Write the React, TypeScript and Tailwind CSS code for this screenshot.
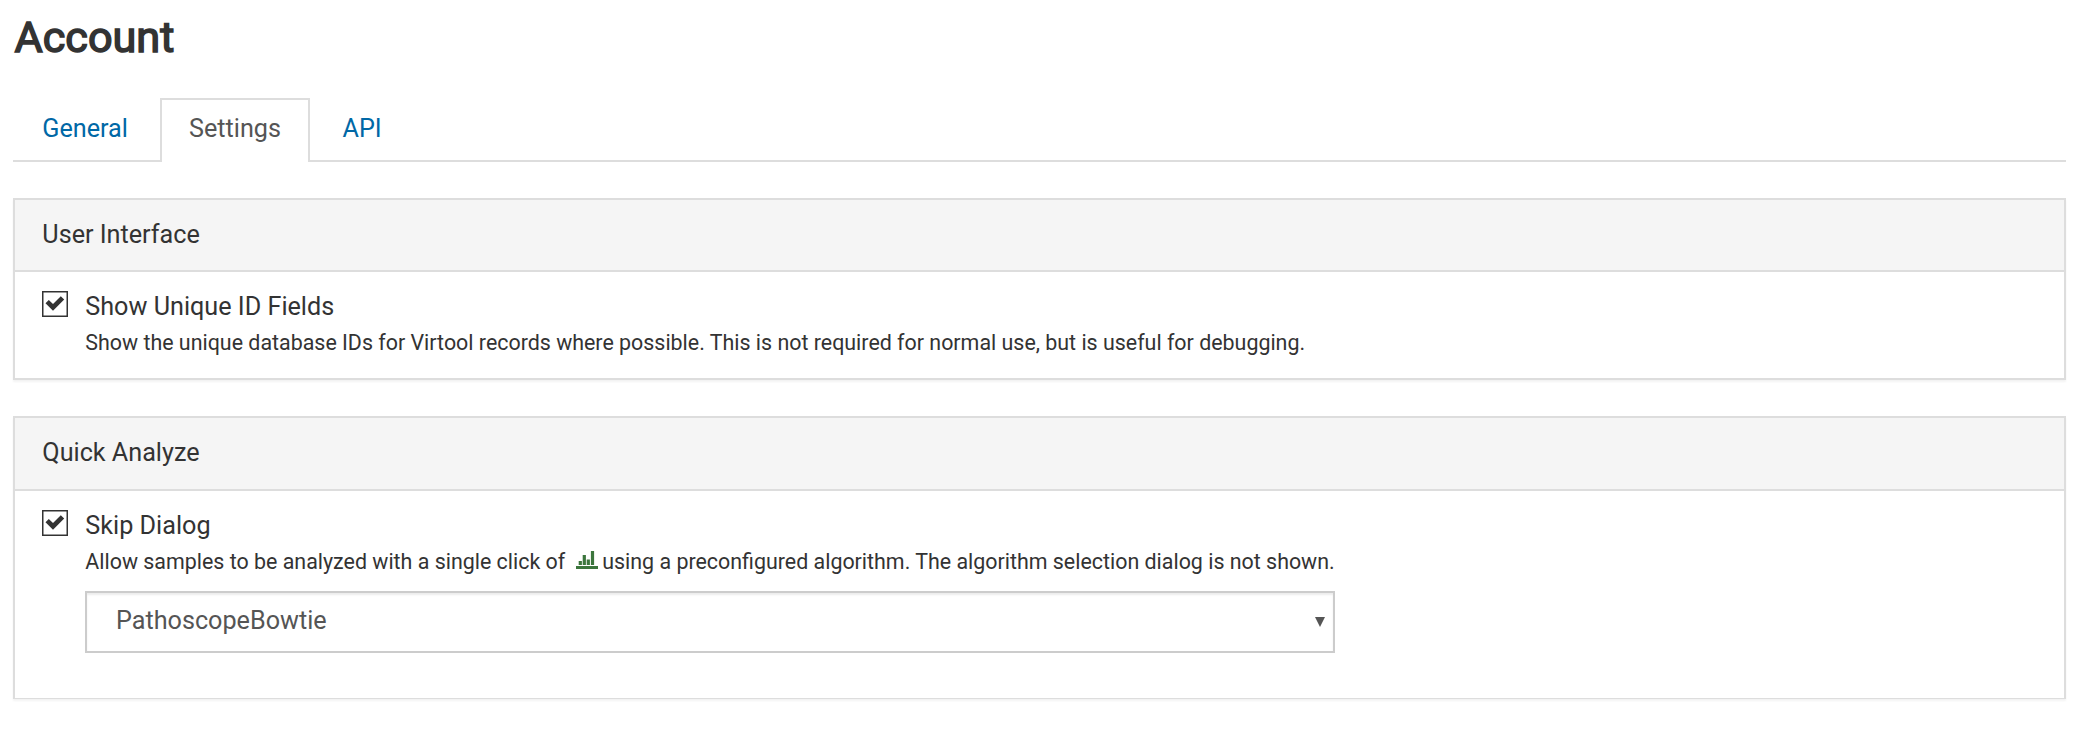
import type { ReactNode } from "react";

function CheckBox() {
  return (
    <svg className="h-[26px] w-[26px] shrink-0" viewBox="0 0 26 26">
      <rect x="0.75" y="0.75" width="24.5" height="24.5" fill="#fff" stroke="#333" strokeWidth="1.5" />
      <path d="M3.5 12.2L6.8 8.9L11 13L18.8 5.2L22.2 8.6L11 19.7Z" fill="#333" />
    </svg>
  );
}

function ChartIcon() {
  return (
    <svg className="mr-[4.5px] ml-[10.5px] inline-block h-[18px] w-[22px] align-baseline" viewBox="0 0 22 18">
      <path d="M0 15h22v3H0zM2.7 10h3.2v4H2.7zM6.7 4h3.2v10h-3.2zM10.7 8.5h3.2v5.5h-3.2zM14.9 0h3.2v14h-3.2z" fill="#3c763d" />
    </svg>
  );
}

function Panel({ title, className, children }: { title: string; className: string; children: ReactNode }) {
  return (
    <section
      className={`flex flex-col border-2 border-[#ddd] bg-white shadow-[0_2px_2px_rgba(0,0,0,0.05)] ${className}`}
    >
      <h2 className="grow border-b-2 border-[#ddd] bg-[#f5f5f5] pt-[17px] pl-[27.3px] text-[25.2px] leading-[36px]">
        {title}
      </h2>
      {children}
    </section>
  );
}

export default function App() {
  return (
    <main className="h-[746px] bg-white pr-3 pl-[13px] font-[Roboto,sans-serif] text-[#333]">
      <h1 className="pt-[13px] pl-[1.5px] text-[43.2px] leading-[50px] font-normal [-webkit-text-stroke:1.5px_#333]">
        Account
      </h1>

      <nav className="mt-[35px] flex h-[64px] border-b-2 border-[#ddd] text-[25.2px] leading-[36px]">
        <a className="w-[147px] pt-[13px] pl-[29.3px] text-[#0068a6]">General</a>
        <a className="-mb-[2px] w-[150px] border-2 border-b-0 border-[#ddd] bg-white pt-[11px] pl-[27px] text-[#555]">
          Settings
        </a>
        <a className="pt-[13px] pl-[32.5px] text-[#0068a6]">API</a>
      </nav>

      <Panel title="User Interface" className="mt-[36px] h-[182px]">
        <div className="flex h-[106px] gap-[17.3px] pl-[27px]">
          <div className="pt-[19px]">
            <CheckBox />
          </div>
          <div className="pt-[17px]">
            <div className="text-[25.2px] leading-[36px]">Show Unique ID Fields</div>
            <p className="text-[21.42px] leading-[36px]">
              Show the unique database IDs for Virtool records where possible. This is not required for normal use, but
              is useful for debugging.
            </p>
          </div>
        </div>
      </Panel>

      <Panel title="Quick Analyze" className="mt-[36px] h-[283px] border-b">
        <div className="flex h-[207px] gap-[17.3px] pl-[27px]">
          <div className="pt-[19px]">
            <CheckBox />
          </div>
          <div className="pt-[17px]">
            <div className="text-[25.2px] leading-[36px]">Skip Dialog</div>
            <p className="text-[21.42px] leading-[36px] whitespace-nowrap">
              Allow samples to be analyzed with a single click of
              <ChartIcon />
              using a preconfigured algorithm. The algorithm selection dialog is not shown.
            </p>
            <div className="mt-[11px] -ml-[0.3px] flex h-[62px] w-[1250px] items-center justify-between border-2 border-[#ccc] bg-white pr-[8px] pl-[29px] text-[25.2px] leading-[36px] text-[#555] shadow-[inset_0_2px_2px_rgba(0,0,0,0.075)]">
              <span className="-mt-[2px]">PathoscopeBowtie</span>
              <svg className="h-[10px] w-[10px]" viewBox="0 0 10 10">
                <path d="M0 0h10L5 10z" fill="#555" />
              </svg>
            </div>
          </div>
        </div>
      </Panel>
    </main>
  );
}
